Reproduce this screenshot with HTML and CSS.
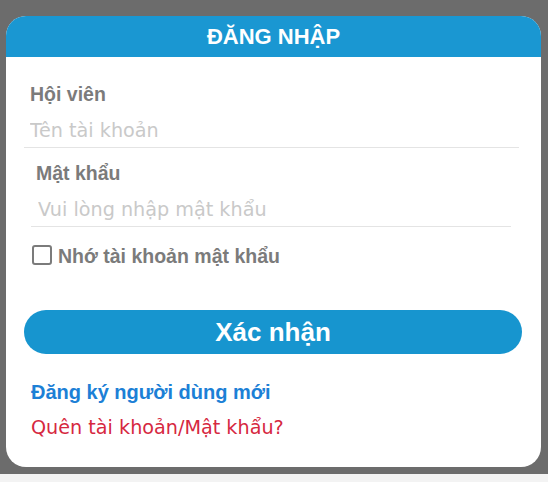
FILE: index.html
```html
<!DOCTYPE html>
<html>

<head>
    <meta charset="utf-8">
    <link rel="stylesheet" href="styles.css">
</head>

<body>
    <div class="overlay">
        <div class="modal">
            <div class="modal-header">ĐĂNG NHẬP</div>

            <!-- Login form -->
            <form class="login-form">
                <div class="field field-user">
                    <label for="username">Hội viên</label>
                    <input type="text" id="username" placeholder="Tên tài khoản">
                </div>

                <div class="field field-pass">
                    <label for="password">Mật khẩu</label>
                    <input type="password" id="password" placeholder="Vui lòng nhập mật khẩu">
                </div>

                <label class="remember">
                    <span class="check-box"></span>
                    <span class="remember-text">Nhớ tài khoản mật khẩu</span>
                </label>

                <button type="submit" class="btn-submit">Xác nhận</button>
            </form>

            <div class="links">
                <a href="#" class="link-register">Đăng ký người dùng mới</a>
                <a href="#" class="link-forgot">Quên tài khoản/Mật khẩu?</a>
            </div>
        </div>
    </div>
    <div class="bottom-strip"></div>
</body>

</html>
```

FILE: styles.css
```css
body {
    font-family: "DejaVu Sans", "Liberation Sans", sans-serif;
    margin: 0;
    background-color: #f3f3f3;
}

.overlay {
    background-color: #6c6c6c;
    height: 474px;
    padding-top: 16px;
    box-sizing: border-box;
}

.bottom-strip {
    height: 8px;
}

.modal {
    background-color: #fff;
    width: 535px;
    height: 451px;
    margin-left: 6px;
    border-radius: 20px;
    overflow: hidden;
}

/* bold texts use the narrower face */
.modal-header,
.field label,
.remember-text,
.btn-submit,
.link-register {
    font-family: "Liberation Sans", Arial, sans-serif;
    font-weight: bold;
}

.modal-header {
    height: 41px;
    background-color: #1a97d2;
    color: #fff;
    font-size: 22px;
    display: flex;
    align-items: center;
    justify-content: center;
}

.field label {
    display: block;
    font-size: 19.5px;
    line-height: 24px;
    color: #7b7b7b;
}

.field input {
    display: block;
    height: 33px;
    margin-top: 9px;
    padding: 0 0 2px 0;
    border: none;
    border-bottom: 1px solid #e4e4e4;
    box-sizing: border-box;
    font-family: "DejaVu Sans", "Liberation Sans", sans-serif;
    font-size: 19.2px;
    color: #555;
    outline: none;
}

.field input::placeholder {
    color: #c9c9c9;
}

.field-user {
    margin: 25px 0 0 18px;
    width: 495px;
}

.field-user label,
.field-user input {
    padding-left: 6px;
}

.field-user input {
    width: 100%;
}

.field-pass {
    margin: 13px 0 0 25px;
    width: 480px;
}

.field-pass label {
    padding-left: 5px;
}

.field-pass input {
    width: 100%;
    padding-left: 7px;
}

.remember {
    display: flex;
    align-items: center;
    margin: 18px 0 0 26px;
    height: 20px;
}

.check-box {
    width: 16px;
    height: 16px;
    border: 2px solid #7b7b7b;
    border-radius: 3px;
}

.remember-text {
    margin-left: 6px;
    padding-top: 3px;
    font-size: 19.5px;
    color: #7b7b7b;
}

.btn-submit {
    display: block;
    width: 498px;
    height: 44px;
    margin: 45px 0 0 18px;
    border: none;
    border-radius: 22px;
    background-color: #1795cf;
    color: #fff;
    font-size: 26px;
    cursor: pointer;
}

.links {
    margin: 21px 0 0 25px;
}

.links a {
    display: block;
    line-height: 35px;
    text-decoration: none;
}

.link-register {
    color: #1c80d6;
    font-size: 20px;
}

.link-forgot {
    color: #d6283f;
    font-size: 19.2px;
}
```
